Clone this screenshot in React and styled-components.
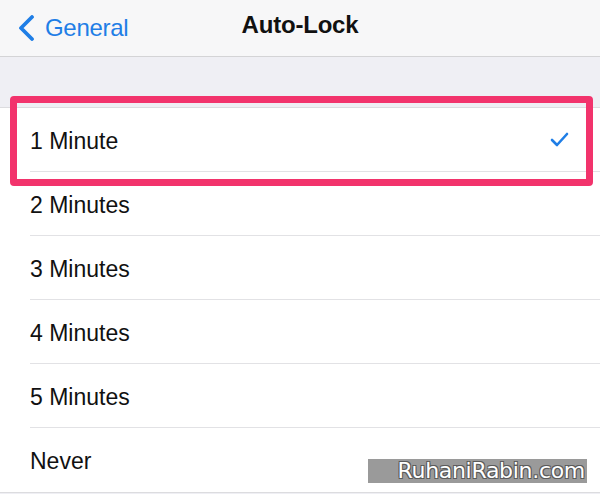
import React from "react";
import styled, { createGlobalStyle } from "styled-components";

const GlobalStyle = createGlobalStyle`
  html, body {
    margin: 0;
    padding: 0;
    background: #efeff4;
    font-family: "Liberation Sans", Arial, sans-serif;
  }
`;

const options = ["1 Minute", "2 Minutes", "3 Minutes", "4 Minutes", "5 Minutes", "Never"];

const App = () => {
  return (
    <Screen>
      <GlobalStyle />
      <NavBar>
        <BackButton>
          <svg width="18" height="26" viewBox="0 0 18 26">
            <path d="M15 2 L4 13 L15 24" fill="none" stroke="#1f7ee6" strokeWidth="3.8" strokeLinecap="round" strokeLinejoin="round" />
          </svg>
          <span>General</span>
        </BackButton>
        <Title>Auto-Lock</Title>
      </NavBar>
      <Spacer />
      <List>
        {options.map((label, i) => (
          <Row key={label} last={i === options.length - 1}>
            <Label>{label}</Label>
            {i === 0 && (
              <Check width="19" height="15" viewBox="0 0 19 15">
                <path d="M2 8 L7 13 L17 2" fill="none" stroke="#1f7ee6" strokeWidth="2.6" strokeLinecap="round" strokeLinejoin="round" />
              </Check>
            )}
            {i === 0 && <Highlight />}
          </Row>
        ))}
        <Watermark>RuhaniRabin.com</Watermark>
      </List>
    </Screen>
  );
};

const Screen = styled.div`
  width: 600px;
  height: 494px;
  overflow: hidden;
  background: #efeff4;
`;

const NavBar = styled.div`
  position: relative;
  height: 57px;
  box-sizing: border-box;
  padding-bottom: 6px;
  background: #f7f7f8;
  border-bottom: 1px solid #d4d4d6;
  display: flex;
  align-items: center;
  justify-content: center;
`;

const BackButton = styled.div`
  position: absolute;
  left: 17px;
  top: 14px;
  display: flex;
  align-items: center;
  gap: 10px;
  color: #1f7ee6;
  font-size: 24px;
  letter-spacing: -0.3px;
`;

const Title = styled.div`
  font-size: 24px;
  font-weight: bold;
  color: #111;
  letter-spacing: -0.2px;
`;

const Spacer = styled.div`
  height: 50px;
`;

const List = styled.div`
  position: relative;
  background: #fff;
  border-top: 1px solid #dcdcdf;
  border-bottom: 1px solid #dcdcdf;
`;

const Row = styled.div`
  position: relative;
  height: 64px;
  display: flex;
  align-items: center;
  margin-left: 30px;
  padding-right: 31px;
  border-bottom: ${({ last }) => (last ? "none" : "1px solid #e2e2e5")};
  box-sizing: border-box;
`;

const Label = styled.div`
  flex: 1;
  font-size: 23px;
  color: #111;
  padding-top: 3px;
`;

const Check = styled.svg`
  display: block;
`;

const Highlight = styled.div`
  position: absolute;
  left: -20px;
  right: 7px;
  top: -12px;
  bottom: -15px;
  border: 7px solid #f2336c;
  border-radius: 4px;
  pointer-events: none;
`;

const Watermark = styled.div`
  position: absolute;
  left: 368px;
  width: 219px;
  bottom: 9px;
  height: 24px;
  box-sizing: border-box;
  padding-right: 2px;
  background: #9a9a9a;
  color: #fff;
  font-family: "DejaVu Sans", sans-serif;
  font-size: 22px;
  line-height: 24px;
  text-align: right;
  letter-spacing: -0.3px;
  text-shadow: -1px -1px 0 #5a5a5a, 1px -1px 0 #5a5a5a, -1px 1px 0 #5a5a5a, 1px 1px 0 #5a5a5a;
`;

export default App;
